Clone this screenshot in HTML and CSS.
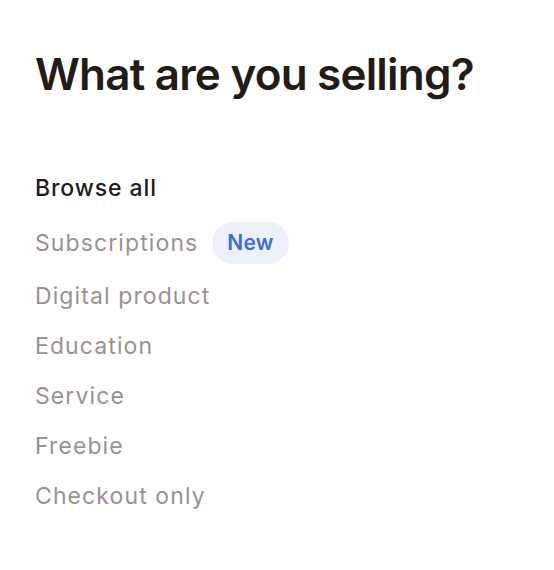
FILE: index.html
```html
<!DOCTYPE html>
<html>
<head>
<meta charset="utf-8">
<link rel="stylesheet" href="styles.css">
</head>
<body>
<div class="page">
  <h1 class="title">What are you selling?</h1>
  <ul class="cats">
    <li class="cat active">Browse all</li>
    <li class="cat cat-badged">Subscriptions <span class="badge">New</span></li>
    <li class="cat">Digital product</li>
    <li class="cat">Education</li>
    <li class="cat">Service</li>
    <li class="cat">Freebie</li>
    <li class="cat">Checkout only</li>
  </ul>
</div>
</body>
</html>
```
FILE: styles.css
```css
html, body { margin: 0; padding: 0; background: #fff; }
body { font-family: Inter, "Noto Sans", sans-serif; }
.page { padding: 52px 35px 0 35px; }
.title {
  margin: 0;
  font-size: 44px;
  font-weight: 600;
  color: #221b18;
  line-height: 44px;
  letter-spacing: -0.8px;
}
.cats { list-style: none; margin: 67px 0 0 0; padding: 0; display: flex; flex-direction: column; }
.cat {
  font-size: 23px;
  color: #9a9290;
  line-height: 50px;
  height: 50px;
  display: flex;
  align-items: center;
  letter-spacing: 1.1px;
}
.cat.active { color: #221b18; font-weight: 500; letter-spacing: 0.9px; }
.cat-badged { height: 50px; padding: 5px 0 3px 0; }
.badge {
  margin-left: 14px;
  background: #ecf1fc;
  color: #3a6fd6;
  font-weight: 600;
  font-size: 21px;
  line-height: 42px;
  padding: 0 15px;
  border-radius: 21px;
  letter-spacing: 0.2px;
}
```
